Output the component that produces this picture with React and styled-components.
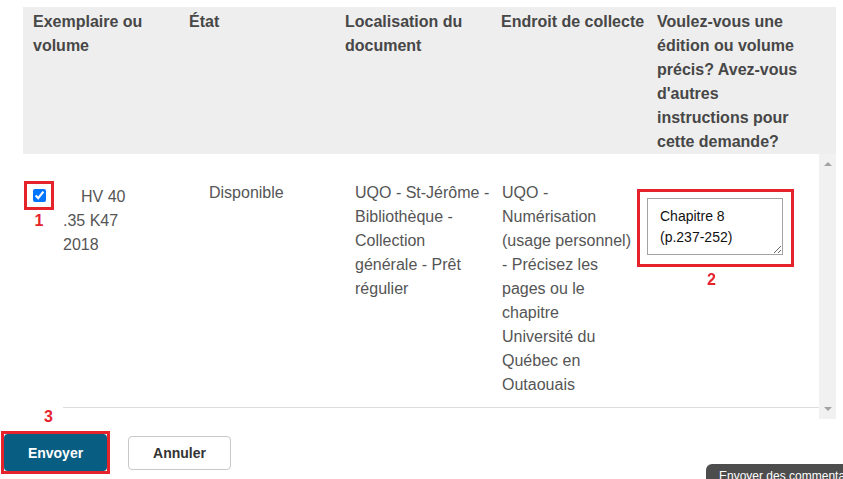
import styled, { createGlobalStyle } from 'styled-components';

const GlobalStyle = createGlobalStyle`
  html, body {
    margin: 0;
    padding: 0;
    background: #ffffff;
    overflow: hidden;
  }
  body {
    font-family: "Liberation Sans", Arial, sans-serif;
  }
`;

const RED = '#e5232b';

const App = () => {
  return (
    <>
      <GlobalStyle />
      <Page>
        <HeadRow>
          <HeadCell>Exemplaire ou volume</HeadCell>
          <HeadCell>État</HeadCell>
          <HeadCell>Localisation du document</HeadCell>
          <HeadCell>Endroit de collecte</HeadCell>
          <HeadCell $pr={30}>Voulez-vous une édition ou volume précis? Avez-vous d'autres instructions pour cette demande?</HeadCell>
        </HeadRow>

        <ScrollArea>
          <Rows>
            <Row>
              <Cell $pl={1}>
                <CopyCell>
                  <Marker>
                    <MarkBox>
                      <Check type="checkbox" defaultChecked />
                    </MarkBox>
                    <StepNum>1</StepNum>
                  </Marker>
                  <CallNumber>
                    <Line $indent={18}>HV 40</Line>
                    <Line>.35 K47</Line>
                    <Line>2018</Line>
                  </CallNumber>
                </CopyCell>
              </Cell>
              <Cell>Disponible</Cell>
              <Cell $pr={2}>UQO - St-Jérôme - Bibliothèque - Collection générale - Prêt régulier</Cell>
              <Cell>UQO - Numérisation (usage personnel) - Précisez les pages ou le chapitre Université du Québec en Outaouais</Cell>
              <Cell $pl={4}>
                <NoteWrap>
                  <NoteBox>
                    <Note defaultValue={'Chapitre 8\n(p.237-252)'} />
                  </NoteBox>
                  <StepNum $top={5} $shift={-4}>2</StepNum>
                </NoteWrap>
              </Cell>
            </Row>
          </Rows>
          <Scrollbar>
            <Arrow $dir="up" />
            <Arrow $dir="down" />
          </Scrollbar>
        </ScrollArea>

        <Footer>
          <FooterNum>3</FooterNum>
          <SubmitBox>
            <Primary>Envoyer</Primary>
          </SubmitBox>
          <Secondary>Annuler</Secondary>
        </Footer>
      </Page>
      <FeedbackTab>Envoyer des commentaires</FeedbackTab>
    </>
  );
};

const Page = styled.div`
  padding-top: 7px;
`;

const HeadRow = styled.div`
  margin-left: 23px;
  width: 813px;
  padding-top: 3px;
  background: #eeeeee;
  display: grid;
  grid-template-columns: 156px 156px 156px 156px 1fr;
`;

const HeadCell = styled.div`
  padding: 0 ${(p) => p.$pr || 0}px 0 10px;
  font-size: 16px;
  line-height: 24px;
  font-weight: 700;
  color: #474747;
`;

const ScrollArea = styled.div`
  margin-left: 23px;
  width: 813px;
  height: 265px;
  display: flex;
`;

const Rows = styled.div`
  flex: 1;
  overflow: hidden;
`;

const Row = styled.div`
  display: grid;
  grid-template-columns: 176px 146px 147px 141px 1fr;
  padding: 27px 0 10px;
  border-bottom: 1px solid #dddddd;
`;

const Cell = styled.div`
  padding: 0 ${(p) => p.$pr || 0}px 0 ${(p) => (p.$pl === undefined ? 10 : p.$pl)}px;
  font-size: 16px;
  line-height: 24px;
  color: #555555;
`;

const CopyCell = styled.div`
  display: flex;
  gap: 9px;
`;

const Marker = styled.div`
  display: flex;
  flex-direction: column;
  align-items: center;
`;

const MarkBox = styled.div`
  width: 30px;
  height: 29px;
  box-sizing: border-box;
  border: 3px solid ${RED};
  display: flex;
  align-items: center;
  justify-content: center;
`;

const Check = styled.input`
  width: 13px;
  height: 13px;
  margin: 0;
  accent-color: #0075ff;
`;

const StepNum = styled.div`
  margin-top: ${(p) => p.$top || 3}px;
  margin-left: ${(p) => (p.$shift || 0) * 2}px;
  font-size: 16px;
  line-height: 16px;
  font-weight: 700;
  color: ${RED};
`;

const CallNumber = styled.div`
  padding-top: 4px;
`;

const Line = styled.div`
  padding-left: ${(p) => p.$indent || 0}px;
`;

const NoteWrap = styled.div`
  margin-top: 8px;
  display: inline-flex;
  flex-direction: column;
  align-items: center;
`;

const NoteBox = styled.div`
  border: 3px solid ${RED};
  padding: 6px 8px 9px 7px;
`;

const Note = styled.textarea`
  display: block;
  width: 136px;
  height: 57px;
  box-sizing: border-box;
  margin: 0;
  padding: 7px 12px;
  border: 1px solid #a3a3a3;
  font-family: "Liberation Sans", Arial, sans-serif;
  font-size: 14px;
  line-height: 21px;
  color: #111111;
  background: #ffffff;
`;

const Scrollbar = styled.div`
  width: 17px;
  background: #f1f1f1;
  display: flex;
  flex-direction: column;
  justify-content: space-between;
  align-items: center;
  padding: 8px 0;
  box-sizing: border-box;
`;

const Arrow = styled.div`
  width: 0;
  height: 0;
  border-left: 4px solid transparent;
  border-right: 4px solid transparent;
  ${(p) =>
    p.$dir === 'up'
      ? 'border-bottom: 4px solid #a3a3a3;'
      : 'border-top: 4px solid #a3a3a3;'}
`;

const Footer = styled.div`
  position: relative;
  margin-top: 12px;
  padding-left: 1px;
  display: flex;
  align-items: center;
  gap: 18px;
`;

const FooterNum = styled.div`
  position: absolute;
  left: 23px;
  top: -27px;
  width: 40px;
  height: 24px;
  box-sizing: border-box;
  padding: 5px 0 0 21px;
  background: #ffffff;
  font-size: 16px;
  line-height: 16px;
  font-weight: 700;
  color: ${RED};
`;

const SubmitBox = styled.div`
  border: 3px solid ${RED};
  display: flex;
`;

const Primary = styled.button`
  width: 103px;
  height: 37px;
  border: none;
  border-radius: 4px;
  background: #075d82;
  color: #ffffff;
  font-family: "Liberation Sans", Arial, sans-serif;
  font-size: 14px;
  font-weight: 700;
`;

const Secondary = styled.button`
  width: 103px;
  height: 34px;
  border: 1px solid #c8c8c8;
  border-radius: 4px;
  background: #ffffff;
  color: #333333;
  font-family: "Liberation Sans", Arial, sans-serif;
  font-size: 14px;
  font-weight: 700;
`;

const FeedbackTab = styled.div`
  position: fixed;
  left: 706px;
  top: 464px;
  height: 30px;
  padding: 4px 13px 0;
  white-space: nowrap;
  background: #4d4d4d;
  border-radius: 6px 0 0 0;
  color: #ffffff;
  font-size: 12px;
  line-height: 16px;
`;

export default App;
